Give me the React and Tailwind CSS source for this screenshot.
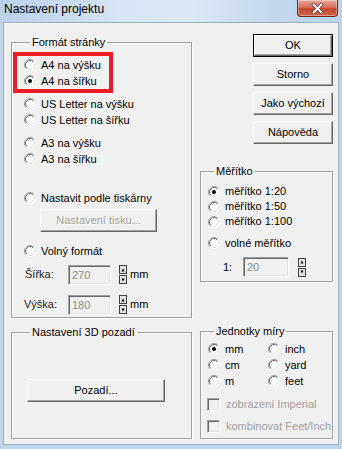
import React from "react";

function Radio({ checked }) {
  return (
    <svg width="12" height="12" viewBox="0 0 12 12" className="shrink-0">
      <circle cx="6" cy="6" r="5.5" fill="#fff" />
      <path d="M2.11 9.89 A5.5 5.5 0 0 1 9.89 2.11" stroke="#a0a0a0" fill="none" />
      <path d="M9.89 2.11 A5.5 5.5 0 0 1 2.11 9.89" stroke="#ffffff" fill="none" />
      <path d="M2.82 9.18 A4.5 4.5 0 0 1 9.18 2.82" stroke="#696969" fill="none" />
      <path d="M9.18 2.82 A4.5 4.5 0 0 1 2.82 9.18" stroke="#e3e3e3" fill="none" />
      {checked && <circle cx="6" cy="6" r="2" fill="#000" />}
    </svg>
  );
}

function RadioRow({ label, checked, h = "h-[16px]" }) {
  return (
    <div className={`flex items-center gap-[5px] ${h}`}>
      <Radio checked={checked} />
      <span>{label}</span>
    </div>
  );
}

function Check({ label }) {
  return (
    <div className="flex items-center gap-[6px] h-[16px] -ml-[1px]">
      <div className="w-[13px] h-[13px] shrink-0 bg-[#f0f0f0] border border-t-[#a0a0a0] border-l-[#a0a0a0] border-b-white border-r-white shadow-[inset_1px_1px_0_#696969,inset_-1px_-1px_0_#e3e3e3]" />
      <span className="text-[#a0a0a0]">{label}</span>
    </div>
  );
}

function Btn({ children, className = "", disabled = false, def = false }) {
  const inner = (
    <div
      className={`w-full h-full flex items-center justify-center bg-[#f0f0f0] border border-t-white border-l-white border-b-[#696969] border-r-[#696969] shadow-[inset_-1px_-1px_0_#a0a0a0] ${
        disabled ? "text-[#a0a0a0] [text-shadow:1px_1px_0_#fff]" : "text-black"
      }`}
    >
      {children}
    </div>
  );
  if (def) {
    return <div className={`border border-black ${className}`}>{inner}</div>;
  }
  return <div className={className}>{inner}</div>;
}

function Input({ value, w }) {
  return (
    <div
      className={`${w} h-[20px] bg-[#f0f0f0] border border-t-[#a0a0a0] border-l-[#a0a0a0] border-b-white border-r-white shadow-[inset_1px_1px_0_#696969,inset_-1px_-1px_0_#e3e3e3] text-[#8c8c8c] pl-[3px] leading-[18px]`}
    >
      {value}
    </div>
  );
}

function Spin() {
  return (
    <div className="flex flex-col w-[8px] shrink-0">
      <div className="h-[9px] border border-[#404040] bg-[#e3e3e3] flex items-center justify-center">
        <svg width="4" height="4" viewBox="0 0 4 4">
          <path d="M2 0.5 L3.5 3.5 L0.5 3.5 Z" fill="#000" />
        </svg>
      </div>
      <div className="h-[9px] mt-[1px] border border-[#404040] bg-[#e3e3e3] flex items-center justify-center">
        <svg width="4" height="4" viewBox="0 0 4 4">
          <path d="M0.5 0.5 L3.5 0.5 L2 3.5 Z" fill="#000" />
        </svg>
      </div>
    </div>
  );
}

function Group({ title, className = "", children }) {
  return (
    <fieldset
      className={`border border-[#a0a0a0] shadow-[inset_1px_1px_0_#fff,1px_1px_0_#fff] ${className}`}
    >
      <legend className="ml-[6px] px-[2px] leading-[14px]">{title}</legend>
      {children}
    </fieldset>
  );
}

export default function App() {
  return (
    <div className="w-[342px] h-[449px] overflow-hidden flex flex-col bg-[#bfd4ea] text-[11px] text-black font-['Liberation_Sans',Arial,sans-serif] select-none">
      {/* Title bar */}
      <div className="h-[22px] shrink-0 flex items-start justify-between bg-[linear-gradient(to_right,#b9d1ea,#d6e4f3_35%,#dbe7f4_55%,#c4d8ed_80%,#bcd3ea)]">
        <div className="pl-[4px] pt-[1px] text-[12px] leading-[16px] text-black">Nastavení projektu</div>
        <div className="mr-[4px] w-[41px] h-[17px] rounded-b-[4px] border border-t-0 border-[#6d2a22] bg-[linear-gradient(to_bottom,#e9a99b,#d7705c_45%,#c4442c_55%,#d0684d)] flex items-center justify-center shadow-[inset_0_0_0_1px_rgba(255,255,255,0.35)]">
          <svg width="13" height="11" viewBox="0 0 13 11">
            <path d="M2.5 1.5 L10.5 9.5 M10.5 1.5 L2.5 9.5" stroke="#5b1a12" strokeWidth="3.4" strokeLinecap="round" />
            <path d="M2.5 1.5 L10.5 9.5 M10.5 1.5 L2.5 9.5" stroke="#ffffff" strokeWidth="2.2" strokeLinecap="round" />
          </svg>
        </div>
      </div>

      {/* Client area */}
      <div className="flex-1 mx-[3px] mb-[4px] bg-[#f0f0f0] border border-[#9db0c6] flex items-start">
        {/* Left column */}
        <div className="ml-[7px] mt-[12px] w-[181px] flex flex-col">
          <Group title="Formát stránky" className="h-[283px] pl-[12px]">
            <div className="flex flex-col">
              <div className="mt-[3px] -ml-[11px] w-[100px] border-[4px] border-[#ed1c24] pl-[7px] pt-[1px]">
                <RadioRow label="A4 na výšku" />
                <RadioRow label="A4 na šířku" checked />
              </div>
              <div className="mt-[3px]">
                <RadioRow label="US Letter na výšku" />
                <RadioRow label="US Letter na šířku" />
              </div>
              <div className="mt-[7px]">
                <RadioRow label="A3 na výšku" />
                <RadioRow label="A3 na šířku" />
              </div>
              <div className="mt-[23px]">
                <RadioRow label="Nastavit podle tiskárny" />
              </div>
              <Btn disabled className="mt-[3px] ml-[16px] w-[117px] h-[23px]">
                Nastavení tisku...
              </Btn>
              <div className="mt-[11px]">
                <RadioRow label="Volný formát" />
              </div>
              <div className="mt-[5px] h-[21px] flex items-center">
                <span className="w-[44px] pl-[1px] text-[#202020]">Šířka:</span>
                <Input value="270" w="w-[43px]" />
                <div className="ml-[8px]">
                  <Spin />
                </div>
                <span className="ml-[3px]">mm</span>
              </div>
              <div className="mt-[9px] h-[21px] flex items-center">
                <span className="w-[44px] text-[#202020]">Výška:</span>
                <Input value="180" w="w-[43px]" />
                <div className="ml-[8px]">
                  <Spin />
                </div>
                <span className="ml-[3px]">mm</span>
              </div>
            </div>
          </Group>

          <Group title="Nastavení 3D pozadí" className="mt-[7px] h-[114px] pl-[12px]">
            <Btn className="mt-[40px] ml-[3px] w-[138px] h-[23px]">Pozadí...</Btn>
          </Group>
        </div>

        {/* Right column */}
        <div className="ml-[8px] mt-[11px] w-[133px] flex flex-col">
          <div className="flex flex-col items-end gap-[6px]">
            <Btn def className="w-[80px] h-[23px]">OK</Btn>
            <Btn className="w-[80px] h-[23px]">Storno</Btn>
            <Btn className="w-[80px] h-[23px]">Jako výchozí</Btn>
            <Btn className="w-[80px] h-[23px]">Nápověda</Btn>
          </div>

          <Group title="Měřítko" className="mt-[20px] h-[118px] pl-[7px]">
            <div className="mt-[6px]">
              <RadioRow label="měřítko 1:20" checked h="h-[15px]" />
              <RadioRow label="měřítko 1:50" h="h-[15px]" />
              <RadioRow label="měřítko 1:100" h="h-[15px]" />
            </div>
            <div className="mt-[6px]">
              <RadioRow label="volné měřítko" />
            </div>
            <div className="mt-[6px] h-[20px] flex items-center">
              <span className="ml-[15px] w-[20px]">1:</span>
              <Input value="20" w="w-[46px]" />
              <div className="ml-[9px]">
                <Spin />
              </div>
            </div>
          </Group>

          <Group title="Jednotky míry" className="mt-[42px] h-[115px] pl-[7px]">
            <div className="mt-[3px] grid grid-cols-[60px_1fr]">
              <RadioRow label="mm" checked />
              <RadioRow label="inch" />
              <RadioRow label="cm" />
              <RadioRow label="yard" />
              <RadioRow label="m" />
              <RadioRow label="feet" />
            </div>
            <div className="mt-[7px]">
              <Check label="zobrazení Imperial" />
            </div>
            <div className="mt-[6px]">
              <Check label="kombinovat Feet/Inch" />
            </div>
          </Group>
        </div>
      </div>
    </div>
  );
}
